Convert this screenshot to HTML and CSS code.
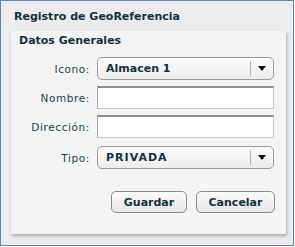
FILE: index.html
```html
<!DOCTYPE html>
<html>
<head>
<meta charset="utf-8">
<link rel="stylesheet" href="styles.css">
</head>
<body>
<div class="window">
  <div class="title">Registro de GeoReferencia</div>
  <div class="panel">
    <div class="legend">Datos Generales</div>
    <div class="form">
      <div class="row r1">
        <label class="lbl">Icono:</label>
        <div class="select"><span class="val">Almacen 1</span><span class="sep"></span><span class="arrow"></span></div>
      </div>
      <div class="row r2">
        <label class="lbl">Nombre:</label>
        <div class="input"></div>
      </div>
      <div class="row r3">
        <label class="lbl">Dirección:</label>
        <div class="input"></div>
      </div>
      <div class="row r4">
        <label class="lbl">Tipo:</label>
        <div class="select"><span class="val caps">PRIVADA</span><span class="sep"></span><span class="arrow"></span></div>
      </div>
    </div>
    <div class="buttons">
      <div class="btn guardar">Guardar</div>
      <div class="btn cancelar">Cancelar</div>
    </div>
  </div>
</div>
</body>
</html>
```
FILE: styles.css
```css
html, body { margin: 0; padding: 0; background: #ffffff; }
body { font-family: "DejaVu Sans", Verdana, sans-serif; }
.window {
  width: 294px; height: 246px; box-sizing: border-box;
  border: 1px solid #5a86c4; background: #ececec;
}
.title {
  height: 30px; padding-left: 13px; box-sizing: border-box;
  font-size: 11px; font-weight: bold; color: #14303e;
  line-height: 32px;
}
.panel {
  margin-left: 10px; width: 275px; height: 203px; box-sizing: border-box;
  background: #f4f4f4;
  box-shadow: 1px 2px 3px rgba(0,0,0,0.28);
  padding-top: 3px;
}
.legend {
  padding-left: 8px; font-size: 11px; font-weight: bold; color: #14303e;
  height: 18px; line-height: 14px;
}
.form { display: flex; flex-direction: column; }
.row { display: flex; align-items: center; height: 23px; }
.r1 { margin-top: 5px; }
.r2, .r3 { margin-top: 6px; }
.r4 { margin-top: 8px; }
.lbl {
  width: 79px; text-align: right; font-size: 10.5px; color: #233f4d;
  margin-right: 7px; letter-spacing: 0.6px;
}
.select {
  width: 177px; height: 23px; box-sizing: border-box;
  border: 1px solid #9a9a9a; border-radius: 5px;
  background: linear-gradient(#fdfdfd, #ececec);
  display: flex; align-items: center; position: relative;
}
.val { flex: 1; padding-left: 8px; font-size: 11px; font-weight: bold; color: #14303e; }
.caps { letter-spacing: 1px; }
.sep { width: 1px; height: 15px; background: #b5b5b5; margin-right: 7px; }
.arrow {
  width: 0; height: 0; border-left: 4px solid transparent; border-right: 4px solid transparent;
  border-top: 5px solid #111; margin-right: 7px;
}
.input {
  width: 177px; height: 23px; box-sizing: border-box; background: #fff;
  border: 1px solid #c8c8c8; border-top: 2px solid #8e8e8e; border-left-color: #a8a8a8;
}
.buttons { display: flex; justify-content: flex-end; margin-top: 22px; padding-right: 11px; gap: 9px; }
.btn {
  height: 22px; box-sizing: border-box; border: 1px solid #8c8c8c; border-radius: 5px;
  background: linear-gradient(#fcfcfc, #e6e6e6);
  font-size: 11px; font-weight: bold; color: #14303e;
  display: flex; align-items: center; justify-content: center;
}
.guardar { width: 76px; }
.cancelar { width: 79px; }
```
